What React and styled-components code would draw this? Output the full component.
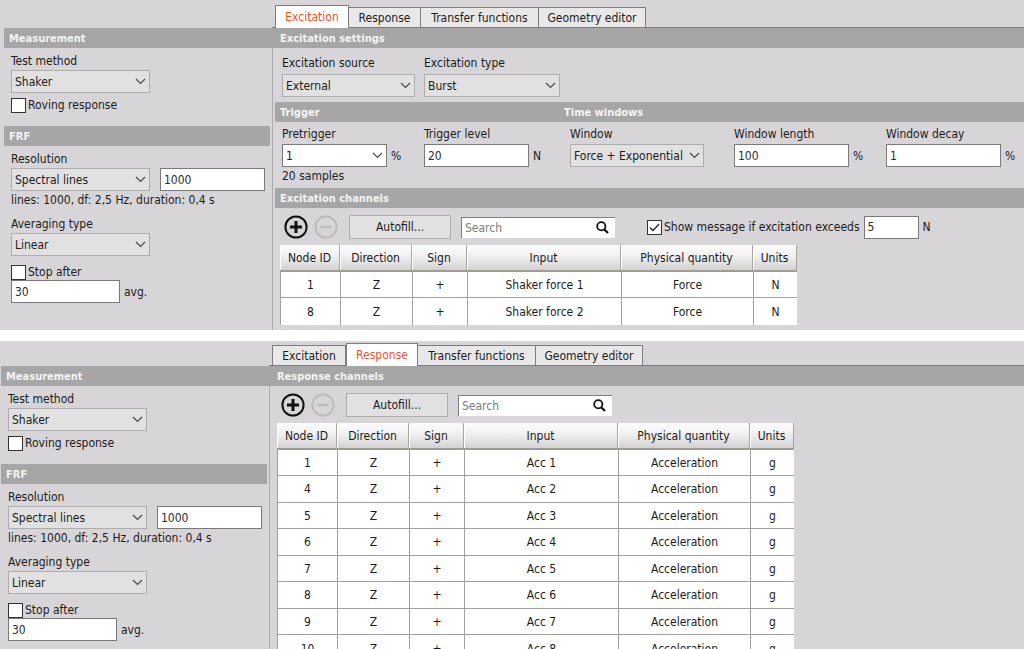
import React, { useId, useState } from "react";
import styled, { createGlobalStyle } from "styled-components";

const GlobalStyle = createGlobalStyle`
  * {
    box-sizing: border-box;
  }
  body {
    margin: 0;
    background: #fff;
    color: #1c1c1c;
  }
  body, button, input, select {
    font-family: "DejaVu Sans Condensed", "DejaVu Sans", Tahoma, sans-serif;
    font-size: 12px;
    line-height: 16px;
  }
`;

//page parts..........
const Page = styled.div`
  height: 100vh;
  overflow: hidden;
  display: flex;
  flex-direction: column;
  gap: 11px;
`;

const Panel = styled.section`
  background-color: #d7d5d7;
  padding-left: ${(props) => props.$inset}px;
  flex: ${(props) => (props.$fill ? "1 1 0" : "none")};
  min-height: 0;
  overflow: hidden;
`;

const TabBar = styled.nav`
  display: flex;
  align-items: flex-end;
  height: ${(props) => props.$height}px;
  margin-left: 268px;
  padding-left: 3px;
  border-bottom: 1px solid #7d7d7d;
`;

const Tab = styled.button`
  width: ${(props) => props.$width}px;
  height: ${(props) => (props.$active ? 23 : 20)}px;
  margin: 0 0 ${(props) => (props.$active ? -1 : 0)}px;
  padding: 0;
  border: 1px solid #7d7d7d;
  border-bottom: none;
  border-left-width: ${(props) => (props.$first || props.$active ? 1 : 0)}px;
  background-color: ${(props) => (props.$active ? "#fff" : "#e9e8e9")};
  color: ${(props) => (props.$active ? "#f0522d" : "#1c1c1c")};
  white-space: nowrap;
`;

const Bar = styled.div`
  display: grid;
  grid-template-columns: ${(props) => props.$columns || "1fr"};
  height: 20px;
  padding-left: 5px;
  background-color: #a6a6a6;
`;

const BarTitle = styled.h2`
  margin: 0;
  color: #f4f4f4;
  font-size: 11px;
  font-weight: bold;
  line-height: 21px;
`;

const Body = styled.div`
  display: grid;
  grid-template-columns: 268px 1fr;
`;

const Sidebar = styled.aside`
  padding-right: 2px;
`;

const Group = styled.div`
  padding: 5px 0 13px 7px;
`;

const Main = styled.main`
  border-left: 1px solid #adabad;
  padding: 0 0 5px 2px;
`;

const FieldRow = styled.div`
  display: grid;
  grid-template-columns: 142px 146px 164px 152px 1fr;
  padding: ${(props) => (props.$tall ? "7px 0 5px 7px" : "4px 0 4px 7px")};
`;

//form parts..........
const FieldBox = styled.div`
  display: flex;
  flex-direction: column;
  gap: ${(props) => props.$gap || 1}px;
  margin-top: ${(props) => props.$top || 0}px;
`;

const Line = styled.div`
  display: flex;
  align-items: center;
  gap: 4px;
`;

const SplitLine = styled.div`
  display: flex;
  gap: 10px;
`;

const Label = styled.label`
  white-space: nowrap;
`;

const Note = styled.div`
  margin-top: 1px;
`;

const SelectWrap = styled.div`
  display: grid;
  align-items: center;
  width: ${(props) => props.$width}px;

  > * {
    grid-area: 1 / 1;
  }
  > svg {
    justify-self: end;
    margin-right: 4px;
    pointer-events: none;
  }
`;

const Select = styled.select`
  appearance: none;
  width: 100%;
  height: 23px;
  padding: 0 0 0 3px;
  border: 1px solid ${(props) => (props.$editable ? "#7a7a7a" : "#adadad")};
  border-radius: 0;
  background-color: ${(props) => (props.$editable ? "#fff" : "#e1e1e1")};
  color: inherit;
`;

const TextInput = styled.input`
  width: ${(props) => props.$width}px;
  height: 23px;
  padding: 0 3px;
  border: 1px solid #7a7a7a;
  border-radius: 0;
  background-color: #fff;
  color: #2c2c2c;
`;

const CheckLine = styled.div`
  display: flex;
  align-items: center;
  gap: 2px;
  height: 16px;
  margin-top: ${(props) => props.$top || 0}px;
`;

const CheckWrap = styled.span`
  display: grid;

  > * {
    grid-area: 1 / 1;
  }
  > svg {
    pointer-events: none;
  }
`;

const CheckBox = styled.input`
  appearance: none;
  width: 15px;
  height: 15px;
  margin: 0;
  border: 1px solid #333;
  background-color: #fff;

  &:not(:checked) + svg {
    visibility: hidden;
  }
`;

//toolbar parts..........
const ToolRow = styled.div`
  display: flex;
  align-items: center;
  padding: 7px 0 6px 9px;
`;

const IconButton = styled.button`
  display: flex;
  width: 24px;
  height: 24px;
  margin-right: 6px;
  padding: 0;
  border: none;
  background: none;
  color: ${(props) => (props.disabled ? "#bdbbbd" : "#111")};
`;

const PushButton = styled.button`
  width: 102px;
  height: 24px;
  margin: 0 10px 0 5px;
  padding: 0;
  border: 1px solid #adadad;
  background-color: #e1e1e1;
  color: inherit;
`;

const SearchBox = styled.div`
  display: flex;
  align-items: center;
  width: 154px;
  height: 21px;
  margin-right: 32px;
  padding: 0 6px 0 3px;
  border-top: 1px solid #7f7f7f;
  border-left: 1px solid #7f7f7f;
  background-color: #fff;

  > input {
    flex: 1;
    min-width: 0;
    padding: 0;
    border: none;
    outline: none;
    background: none;
  }
  > input::placeholder {
    color: #7c7c7c;
  }
`;

//table parts..........
const Grid = styled.table`
  width: 517px;
  margin-left: 5px;
  table-layout: fixed;
  border-collapse: separate;
  border-spacing: 0;
  background-color: #fff;
  text-align: center;

  th {
    height: 27px;
    padding: 0;
    border-right: 1px solid #a9a69c;
    border-bottom: 2px solid #9f9c93;
    background: linear-gradient(#fdfdfd, #f0f0f0 45%, #d2d2d2);
    box-shadow: inset 1px 0 #fff;
    font-weight: normal;
    white-space: nowrap;
  }
  td {
    height: 26px;
    padding: 0;
    border-left: 1px solid #a0a0a0;
    border-bottom: 1px solid #a0a0a0;
  }
  tr:nth-child(even) td {
    height: 27px;
  }
  tr:last-child td {
    border-bottom: none;
  }
`;

const Col = styled.col`
  width: ${(props) => props.$width}px;
`;

const tabs = [
  { name: "Excitation", width: 74 },
  { name: "Response", width: 72 },
  { name: "Transfer functions", width: 118 },
  { name: "Geometry editor", width: 107 },
];

const columns = [
  { title: "Node ID", width: 60 },
  { title: "Direction", width: 72 },
  { title: "Sign", width: 55 },
  { title: "Input", width: 154 },
  { title: "Physical quantity", width: 132 },
  { title: "Units", width: 44 },
];

const excitationRows = [
  ["1", "Z", "+", "Shaker force 1", "Force", "N"],
  ["8", "Z", "+", "Shaker force 2", "Force", "N"],
];

const responseRows = [1, 4, 5, 6, 7, 8, 9, 10].map((node, i) => [
  node,
  "Z",
  "+",
  `Acc ${i + 1}`,
  "Acceleration",
  "g",
]);

const Chevron = () => (
  <svg width="11" height="7" viewBox="0 0 11 7" fill="none">
    <path d="M1 1l4.5 4.5L10 1" stroke="#4a4a4a" strokeWidth="1.2" />
  </svg>
);

const CircleIcon = ({ plus }) => (
  <svg width="24" height="24" viewBox="0 0 24 24" fill="none">
    <circle cx="12" cy="12" r="10.6" stroke="currentColor" strokeWidth="2" />
    <path
      d={plus ? "M6 12h12M12 6v12" : "M6.5 12h11"}
      stroke="currentColor"
      strokeWidth={plus ? 3 : 2.4}
    />
  </svg>
);

const SearchIcon = () => (
  <svg width="13" height="13" viewBox="0 0 13 13" fill="none">
    <circle cx="5.3" cy="5.2" r="4.1" stroke="#111" strokeWidth="1.8" />
    <path d="M8.2 8.2l3.8 3.8" stroke="#111" strokeWidth="2.3" />
  </svg>
);

function SelectField({ label, value, width, gap, top, editable, unit, children }) {
  const id = useId();
  return (
    <FieldBox $gap={gap} $top={top}>
      <Label htmlFor={id}>{label}</Label>
      <SplitLine>
        <Line>
          <SelectWrap $width={width}>
            <Select id={id} $editable={editable} defaultValue={value}>
              <option>{value}</option>
            </Select>
            <Chevron />
          </SelectWrap>
          {unit && <span>{unit}</span>}
        </Line>
        {children}
      </SplitLine>
    </FieldBox>
  );
}

function TextField({ label, value, width, gap, unit }) {
  const id = useId();
  return (
    <FieldBox $gap={gap}>
      <Label htmlFor={id}>{label}</Label>
      <Line>
        <TextInput id={id} $width={width} defaultValue={value} />
        <span>{unit}</span>
      </Line>
    </FieldBox>
  );
}

function Check({ label, top, checked }) {
  const id = useId();
  return (
    <CheckLine $top={top}>
      <CheckWrap>
        <CheckBox id={id} type="checkbox" defaultChecked={checked} />
        <svg width="15" height="15" viewBox="0 0 15 15" fill="none">
          <path d="M3 7.5l3 3 6-6.5" stroke="#222" strokeWidth="1.3" />
        </svg>
      </CheckWrap>
      <Label htmlFor={id}>{label}</Label>
    </CheckLine>
  );
}

function Settings() {
  return (
    <Sidebar>
      <Group>
        <SelectField label="Test method" value="Shaker" width={139} />
        <Check label="Roving response" top={4} />
      </Group>
      <Bar>
        <BarTitle>FRF</BarTitle>
      </Bar>
      <Group>
        <SelectField label="Resolution" value="Spectral lines" width={139}>
          <TextInput
            $width={105}
            defaultValue="1000"
            aria-label="Number of lines"
          />
        </SelectField>
        <Note>lines: 1000, df: 2,5 Hz, duration: 0,4 s</Note>
        <SelectField
          label="Averaging type"
          value="Linear"
          width={139}
          top={8}
        />
        <Check label="Stop after" top={8} />
        <Line>
          <TextInput
            $width={109}
            defaultValue="30"
            aria-label="Number of averages"
          />
          <span>avg.</span>
        </Line>
      </Group>
    </Sidebar>
  );
}

function Toolbar({ children }) {
  return (
    <ToolRow>
      <IconButton aria-label="Add">
        <CircleIcon plus />
      </IconButton>
      <IconButton aria-label="Remove" disabled>
        <CircleIcon />
      </IconButton>
      <PushButton>Autofill...</PushButton>
      <SearchBox>
        <input type="text" placeholder="Search" aria-label="Search" />
        <SearchIcon />
      </SearchBox>
      {children}
    </ToolRow>
  );
}

function Channels({ rows }) {
  return (
    <Grid>
      <colgroup>
        {columns.map((column) => (
          <Col key={column.title} $width={column.width} />
        ))}
      </colgroup>
      <thead>
        <tr>
          {columns.map((column) => (
            <th key={column.title}>{column.title}</th>
          ))}
        </tr>
      </thead>
      <tbody>
        {rows.map((row) => (
          <tr key={row[0]}>
            {row.map((cell, i) => (
              <td key={i}>{cell}</td>
            ))}
          </tr>
        ))}
      </tbody>
    </Grid>
  );
}

function TestPanel({ initialTab, title, inset, tabHeight, fill, children }) {
  const [active, setActive] = useState(initialTab);

  return (
    <Panel $inset={inset} $fill={fill}>
      <TabBar $height={tabHeight}>
        {tabs.map((tab, i) => (
          <Tab
            key={tab.name}
            $width={tab.width}
            $first={i === 0}
            $active={tab.name === active}
            onClick={() => setActive(tab.name)}
          >
            {tab.name}
          </Tab>
        ))}
      </TabBar>
      <Bar $columns="271px 1fr">
        <BarTitle>Measurement</BarTitle>
        <BarTitle>{title}</BarTitle>
      </Bar>
      <Body>
        <Settings />
        <Main>{children}</Main>
      </Body>
    </Panel>
  );
}

function App() {
  return (
    <Page>
      <GlobalStyle />
      <TestPanel
        initialTab="Excitation"
        title="Excitation settings"
        inset={4}
        tabHeight={28}
      >
        <FieldRow $tall>
          <SelectField
            label="Excitation source"
            value="External"
            width={133}
            gap={3}
          />
          <SelectField
            label="Excitation type"
            value="Burst"
            width={136}
            gap={3}
          />
        </FieldRow>
        <Bar $columns="284px 1fr">
          <BarTitle>Trigger</BarTitle>
          <BarTitle>Time windows</BarTitle>
        </Bar>
        <FieldRow>
          <div>
            <SelectField
              label="Pretrigger"
              value="1"
              width={105}
              gap={2}
              unit="%"
              editable
            />
            <Note>20 samples</Note>
          </div>
          <TextField label="Trigger level" value="20" width={105} gap={2} unit="N" />
          <SelectField
            label="Window"
            value="Force + Exponential"
            width={134}
            gap={2}
          />
          <TextField label="Window length" value="100" width={115} gap={2} unit="%" />
          <TextField label="Window decay" value="1" width={115} gap={2} unit="%" />
        </FieldRow>
        <Bar>
          <BarTitle>Excitation channels</BarTitle>
        </Bar>
        <Toolbar>
          <Line>
            <Check label="Show message if excitation exceeds" checked />
            <TextInput $width={55} defaultValue="5" aria-label="Force limit" />
            <span>N</span>
          </Line>
        </Toolbar>
        <Channels rows={excitationRows} />
      </TestPanel>
      <TestPanel
        initialTab="Response"
        title="Response channels"
        inset={1}
        tabHeight={25}
        fill
      >
        <Toolbar />
        <Channels rows={responseRows} />
      </TestPanel>
    </Page>
  );
}

export default App;
